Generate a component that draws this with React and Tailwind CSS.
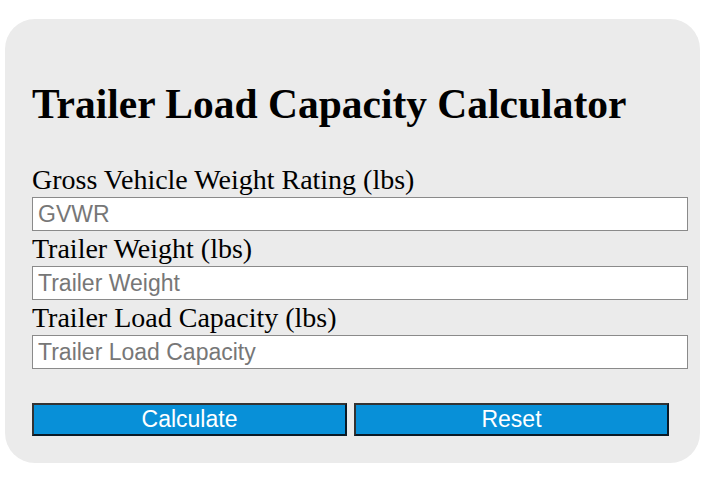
export default function App() {
  return (
    <div className="w-[720px] h-[500px] bg-white pt-[19px] pl-[5px]">
      <div className="w-[695px] h-[444px] rounded-[30px] bg-[#ebebeb] pl-[27px] pr-[12px] pt-[65px]">
        <h1 className="font-['Liberation_Serif',serif] font-bold text-[41.5px] leading-[40px] text-black whitespace-nowrap">
          Trailer Load Capacity Calculator
        </h1>
        <form className="mt-[38px] flex flex-col font-['Liberation_Serif',serif] text-[28px] text-black">
          <label className="leading-[35px] whitespace-nowrap">Gross Vehicle Weight Rating (lbs)</label>
          <input
            placeholder="GVWR"
            className="h-[34px] w-full border border-[#8a8a8a] bg-white px-[5px] font-['Liberation_Sans',sans-serif] text-[23px] placeholder:text-[#777]"
          />
          <label className="leading-[35px] whitespace-nowrap">Trailer Weight (lbs)</label>
          <input
            placeholder="Trailer Weight"
            className="h-[34px] w-full border border-[#8a8a8a] bg-white px-[5px] font-['Liberation_Sans',sans-serif] text-[23px] placeholder:text-[#777]"
          />
          <label className="leading-[35px] whitespace-nowrap">Trailer Load Capacity (lbs)</label>
          <input
            placeholder="Trailer Load Capacity"
            className="h-[34px] w-full border border-[#8a8a8a] bg-white px-[5px] font-['Liberation_Sans',sans-serif] text-[23px] placeholder:text-[#777]"
          />
          <div className="mt-[34px] flex gap-[7px] pr-[19px]">
            <button
              type="button"
              className="h-[33px] flex-1 border-2 border-[#333] border-b-[#0a1a26] border-r-[#0a1a26] bg-[#0890d8] font-['Liberation_Sans',sans-serif] text-[23px] leading-none text-white"
            >
              Calculate
            </button>
            <button
              type="button"
              className="h-[33px] flex-1 border-2 border-[#333] border-b-[#0a1a26] border-r-[#0a1a26] bg-[#0890d8] font-['Liberation_Sans',sans-serif] text-[23px] leading-none text-white"
            >
              Reset
            </button>
          </div>
        </form>
      </div>
    </div>
  );
}
